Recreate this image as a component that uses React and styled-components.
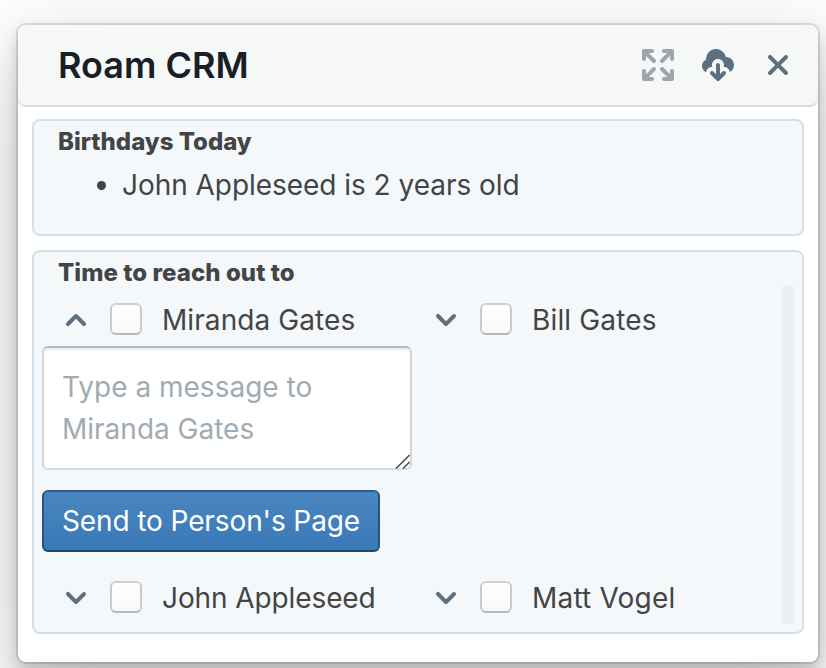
import React from 'react';
import styled, { createGlobalStyle } from 'styled-components';

const GlobalStyle = createGlobalStyle`
  * { box-sizing: border-box; }
  html, body { margin: 0; height: 668px; overflow: hidden; }
  body {
    background: #fff;
    font-family: Inter, "Liberation Sans", sans-serif;
    color: #444;
  }
`;

const Page = styled.div`
  height: 668px;
  padding: 25px 8px 6px 18px;
  overflow: hidden;
  background: #fff;
`;

const Dialog = styled.section`
  height: 637px;
  border-radius: 8px;
  background: #fff;
  box-shadow: 0 0 0 2px rgba(16, 22, 26, 0.12), 0 8px 16px rgba(16, 22, 26, 0.2),
    0 36px 92px 12px rgba(16, 26, 24, 0.2);
`;

const Header = styled.header`
  display: flex;
  align-items: center;
  height: 80px;
  padding: 0 20px 0 40px;
  border-radius: 8px;
  background: #f6f8f8;
  box-shadow: 0 2px 0 #dadcdc;
`;

const Title = styled.h1`
  flex: 1;
  margin: 0;
  font-size: 36px;
  font-weight: 600;
  line-height: 40px;
  color: #182026;
`;

const Actions = styled.div`
  display: flex;
  align-items: center;
`;

const IconButton = styled.button`
  display: flex;
  margin: 0 0 0 ${(p) => p.$gap || 0}px;
  padding: 0;
  border: 0;
  background: none;
  color: ${(p) => (p.$muted ? '#9ba6af' : '#5c7080')};
`;

const Icon = styled.svg`
  display: block;
  flex: none;
  width: ${(p) => p.$size || 32}px;
  height: ${(p) => p.$size || 32}px;
  fill: currentColor;
`;

const Content = styled.div`
  display: flex;
  flex-direction: column;
  gap: 14px;
  padding: 14px 14px 0;
`;

const Panel = styled.section`
  height: ${(p) => p.$height}px;
  padding: ${(p) => p.$pad};
  border: 2px solid #d4e0e9;
  border-radius: 8px;
  background: #f4f8fb;
`;

const PanelTitle = styled.h2`
  margin: 0;
  padding-left: ${(p) => p.$indent || 0}px;
  font-size: 24px;
  font-weight: 800;
  line-height: 36px;
  letter-spacing: ${(p) => p.$tracking || 0}px;
  color: #444;
`;

const BirthdayList = styled.ul`
  margin: 4px 0 0;
  padding-left: 64px;
  font-size: 28px;
  line-height: 42px;
  letter-spacing: -0.04px;
`;

const Scroller = styled.div`
  display: flex;
  justify-content: space-between;
  height: 338px;
  margin-top: -5px;
`;

const People = styled.div`
  display: grid;
  grid-template-columns: 370px 370px;
  grid-template-rows: 60px 218px 60px;
  width: 740px;
`;

const Track = styled.div`
  flex: none;
  width: 12px;
  background: #ebeff2;
`;

const PersonRow = styled.div`
  display: flex;
  align-items: center;
  height: 60px;
  padding: 8px 0 0 18px;
  color: #5c7080;
`;

const Checkbox = styled.span`
  width: 32px;
  height: 32px;
  margin: -2px 20px 0 18px;
  border: 2px solid;
  border-color: #cdd0d3 #c8cbce #b5b9bc;
  border-radius: 6px;
  background: linear-gradient(#fff, #f7f8f9);
`;

const Name = styled.span`
  font-size: 28px;
  line-height: 36px;
  letter-spacing: ${(p) => p.$tracking || 0}px;
  color: #444;
  white-space: nowrap;
`;

const Composer = styled.div`
  grid-column: 1 / -1;
  display: flex;
  flex-direction: column;
  align-items: flex-start;
  gap: 20px;
`;

const MessageBox = styled.div`
  display: grid;
  width: 370px;
  height: 124px;
  padding: 18px 0 0 18px;
  border: 2px solid;
  border-color: #b9bbbd #d3d6d8 #d9dbdd;
  border-radius: 6px;
  background: #fff;
  box-shadow: inset 0 2px 2px rgba(16, 22, 26, 0.08);
  font-size: 28px;
  line-height: 42px;
  color: #a1abb4;

  > * { grid-area: 1 / 1; }
`;

const Placeholder = styled.span`
  width: 300px;
`;

const Grip = styled.svg`
  place-self: end;
  display: block;
  width: 16px;
  height: 16px;
  margin-bottom: -1px;
  fill: none;
  stroke: #555;
  stroke-width: 1.6;
`;

const SendButton = styled.button`
  width: 338px;
  height: 62px;
  padding: 0;
  border: 2px solid;
  border-color: #2f5c85 #28547c #23486a;
  border-radius: 6px;
  background: linear-gradient(#4a86bf, #3a79b8);
  font: 400 28px/40px Inter, "Liberation Sans", sans-serif;
  letter-spacing: -0.1px;
  color: #fff;
  white-space: nowrap;
`;

const chevrons = {
  down: 'M12 5c-.28 0-.53.11-.71.29L8 8.59l-3.29-3.3a1.003 1.003 0 00-1.42 1.42l4 4c.18.18.43.29.71.29s.53-.11.71-.29l4-4A1.003 1.003 0 0012 5z',
  up: 'M12.71 9.29l-4-4C8.53 5.11 8.28 5 8 5s-.53.11-.71.29l-4 4a1.003 1.003 0 001.42 1.42L8 7.41l3.29 3.29c.18.19.43.3.71.3a1.003 1.003 0 00.71-1.71z',
};

const arrow =
  'M3.41 2H5c.55 0 1-.45 1-1s-.45-1-1-1H1C.45 0 0 .45 0 1v4c0 .55.45 1 1 1s1-.45 1-1V3.41L5.29 6.7c.18.19.43.3.71.3a1.003 1.003 0 00.71-1.71z';

function Person({ name, open, tracking }) {
  return (
    <PersonRow>
      <Icon viewBox="0 0 16 16"><path d={open ? chevrons.up : chevrons.down} /></Icon>
      <Checkbox role="checkbox" aria-checked="false" />
      <Name $tracking={tracking}>{name}</Name>
    </PersonRow>
  );
}

export default function App() {
  return (
    <Page>
      <GlobalStyle />
      <Dialog>
        <Header>
          <Title>Roam CRM</Title>
          <Actions>
            <IconButton $muted aria-label="Expand">
              <Icon viewBox="0 0 16 16">
                <path d={arrow} />
                <path d={arrow} transform="matrix(-1 0 0 1 16 0)" />
                <path d={arrow} transform="matrix(1 0 0 -1 0 16)" />
                <path d={arrow} transform="matrix(-1 0 0 -1 16 16)" />
              </Icon>
            </IconButton>
            <IconButton $gap={28} aria-label="Download">
              <Icon viewBox="0 0 16 16">
                <path d="M11 11c-.28 0-.53.11-.71.29L9 12.59V8c0-.55-.45-1-1-1s-1 .45-1 1v4.59L5.71 11.3A.965.965 0 005 11a1.003 1.003 0 00-.71 1.71l3 3c.18.18.43.29.71.29s.53-.11.71-.29l3-3A1.003 1.003 0 0011 11z" />
                <path d="M12 4c-.03 0-.07 0-.1.01A5 5 0 002 5c0 .11.01.22.02.33A3.51 3.51 0 000 8.5c0 1.41.84 2.61 2.03 3.17C2.2 10.17 3.46 9 5 9c.06 0 .13.02.19.02C5.07 8.7 5 8.36 5 8c0-1.66 1.34-3 3-3s3 1.34 3 3c0 .36-.07.7-.19 1.02.06 0 .13-.02.19-.02 1.48 0 2.7 1.07 2.95 2.47A3.964 3.964 0 0016 8c0-2.21-1.79-4-4-4z" />
              </Icon>
            </IconButton>
            <IconButton $gap={24} aria-label="Close">
              <Icon $size={40} viewBox="0 0 20 20">
                <path d="M11.41 10l3.29-3.29c.19-.18.3-.43.3-.71a1.003 1.003 0 00-1.71-.71L10 8.59l-3.29-3.3a1.003 1.003 0 00-1.42 1.42L8.59 10 5.3 13.29c-.19.18-.3.43-.3.71a1.003 1.003 0 001.71.71l3.29-3.3 3.29 3.29c.18.19.43.3.71.3a1.003 1.003 0 00.71-1.71L11.41 10z" />
              </Icon>
            </IconButton>
          </Actions>
        </Header>
        <Content>
          <Panel $height={117} $pad="3px 24px 0">
            <PanelTitle>Birthdays Today</PanelTitle>
            <BirthdayList>
              <li>John Appleseed is 2 years old</li>
            </BirthdayList>
          </Panel>
          <Panel $height={384} $pad="3px 8px 0">
            <PanelTitle $indent={16} $tracking={0.07}>Time to reach out to</PanelTitle>
            <Scroller>
              <People>
                <Person name="Miranda Gates" tracking={0.08} open />
                <Person name="Bill Gates" tracking={0.15} />
                <Composer>
                  <MessageBox role="textbox">
                    <Placeholder>Type a message to Miranda Gates</Placeholder>
                    <Grip viewBox="0 0 16 16"><path d="M2 15.5L15.5 2M9 15.5l6.5-6.5" /></Grip>
                  </MessageBox>
                  <SendButton>Send to Person's Page</SendButton>
                </Composer>
                <Person name="John Appleseed" tracking={-0.1} />
                <Person name="Matt Vogel" tracking={0.2} />
              </People>
              <Track />
            </Scroller>
          </Panel>
        </Content>
      </Dialog>
    </Page>
  );
}
